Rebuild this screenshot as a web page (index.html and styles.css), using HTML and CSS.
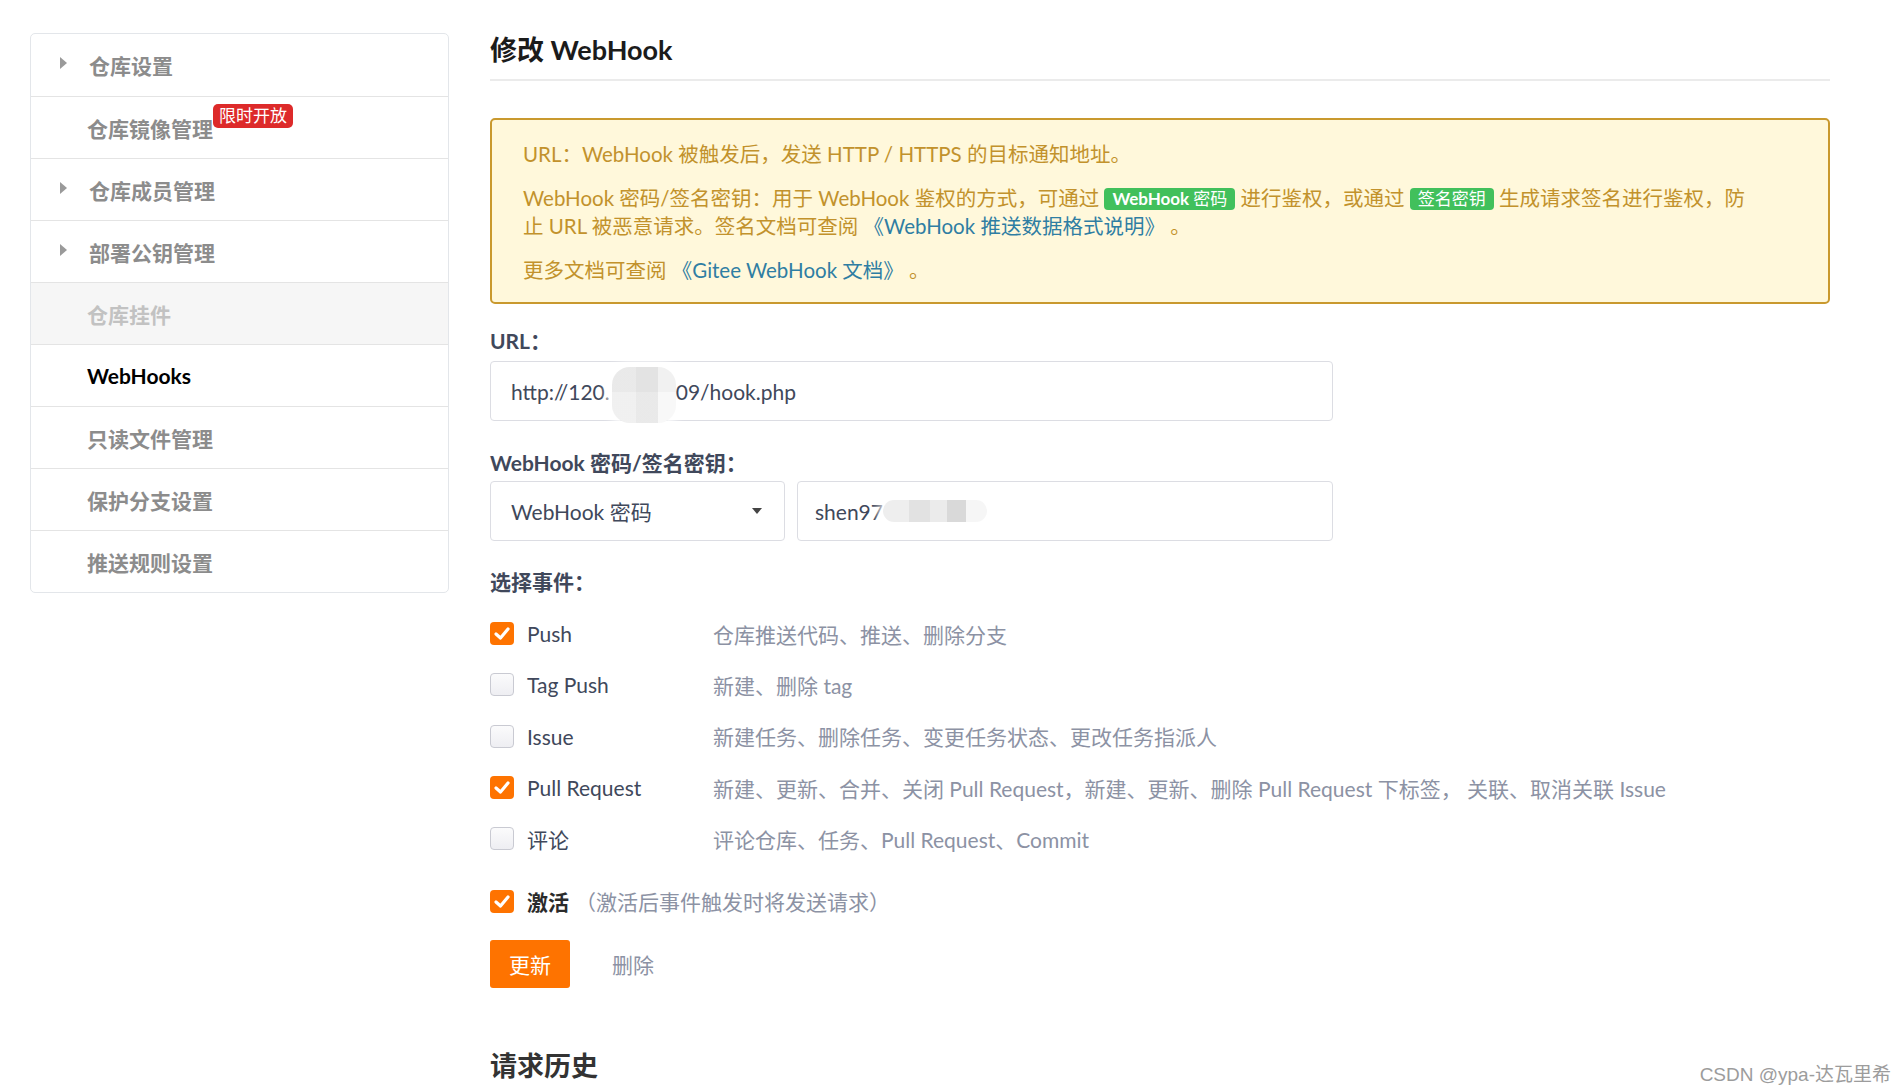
FILE: index.html
```html
<!DOCTYPE html>
<html lang="zh-CN">
<head>
    <meta charset="UTF-8">
    <title>修改 WebHook</title>
    <link rel="stylesheet" href="styles.css">
</head>
<body>

    <!-- Sidebar -->
    <aside class="sidebar">
        <ul class="side-menu">
            <li class="side-item has-arrow"><span class="arrow"></span>仓库设置</li>
            <li class="side-item">仓库镜像管理<span class="hot-badge">限时开放</span></li>
            <li class="side-item has-arrow"><span class="arrow"></span>仓库成员管理</li>
            <li class="side-item has-arrow"><span class="arrow"></span>部署公钥管理</li>
            <li class="side-item disabled">仓库挂件</li>
            <li class="side-item active">WebHooks</li>
            <li class="side-item">只读文件管理</li>
            <li class="side-item">保护分支设置</li>
            <li class="side-item">推送规则设置</li>
        </ul>
    </aside>

    <!-- Main Content -->
    <main class="content">
        <h2 class="page-title">修改 WebHook</h2>

        <div class="notice">
            <p>URL：WebHook 被触发后，发送 HTTP / HTTPS 的目标通知地址。</p>
            <p>WebHook 密码/签名密钥：用于 WebHook 鉴权的方式，可通过 <span class="tag">WebHook <span class="tag-cn">密码</span></span> 进行鉴权，或通过 <span class="tag"><span class="tag-cn">签名密钥</span></span> 生成请求签名进行鉴权，防止 URL 被恶意请求。签名文档可查阅 <a href="#">《WebHook 推送数据格式说明》</a> 。</p>
            <p>更多文档可查阅 <a href="#">《Gitee WebHook 文档》</a> 。</p>
        </div>

        <label class="field-label">URL：</label>
        <div class="text-input url-input">http://120.<span class="blur blur-url"></span>09/hook.php</div>

        <label class="field-label second">WebHook 密码/签名密钥：</label>
        <div class="secret-row">
            <div class="select-box">WebHook 密码<span class="caret"></span></div>
            <div class="text-input secret-input">shen97<span class="blur blur-secret"></span></div>
        </div>

        <label class="field-label events-label">选择事件：</label>
        <div class="events">
            <div class="event-row">
                <span class="check checked"><svg viewBox="0 0 24 23"><polyline points="6,12 10.5,16 18,7"/></svg></span>
                <span class="event-name">Push</span>
                <span class="event-desc">仓库推送代码、推送、删除分支</span>
            </div>
            <div class="event-row">
                <span class="check"></span>
                <span class="event-name">Tag Push</span>
                <span class="event-desc">新建、删除 tag</span>
            </div>
            <div class="event-row">
                <span class="check"></span>
                <span class="event-name">Issue</span>
                <span class="event-desc">新建任务、删除任务、变更任务状态、更改任务指派人</span>
            </div>
            <div class="event-row">
                <span class="check checked"><svg viewBox="0 0 24 23"><polyline points="6,12 10.5,16 18,7"/></svg></span>
                <span class="event-name">Pull Request</span>
                <span class="event-desc">新建、更新、合并、关闭 Pull Request，新建、更新、删除 Pull Request 下标签， 关联、取消关联 Issue</span>
            </div>
            <div class="event-row">
                <span class="check"></span>
                <span class="event-name">评论</span>
                <span class="event-desc">评论仓库、任务、Pull Request、Commit</span>
            </div>
        </div>

        <div class="active-row">
            <span class="check checked"><svg viewBox="0 0 24 23"><polyline points="6,12 10.5,16 18,7"/></svg></span>
            <strong>激活</strong>
            <span class="event-desc">（激活后事件触发时将发送请求）</span>
        </div>

        <div class="actions">
            <button class="btn-update">更新</button>
            <a href="#" class="btn-delete">删除</a>
        </div>

        <h2 class="history-title">请求历史</h2>
    </main>

    <div class="watermark">CSDN @ypa-达瓦里希</div>

</body>
</html>
```

FILE: styles.css
```css
/* Page */
body {
    margin: 0;
    padding: 33px 0 0 30px;
    display: flex;
    align-items: flex-start;
    background: #fff;
    color: #40485b;
    font-family: "Lato", "Noto Sans CJK SC", sans-serif;
    font-size: 21px;
    height: 1058px;
    overflow: hidden;
}

/* Sidebar */
.sidebar {
    width: 417px;
    flex-shrink: 0;
    border: 1px solid #e3e6ea;
    border-radius: 5px;
    margin-right: 41px;
    overflow: hidden;
}

.side-menu {
    list-style: none;
    margin: 0;
    padding: 0;
}

.side-item {
    box-sizing: border-box;
    height: 62px;
    display: flex;
    align-items: center;
    padding-left: 56px;
    border-top: 1.5px solid #e4e4e4;
    color: #8c8c8c;
    font-weight: bold;
    font-size: 21px;
}

.side-item:first-child {
    border-top: none;
}

.side-item.has-arrow {
    padding-left: 29px;
}

.arrow {
    width: 0;
    height: 0;
    border-top: 6px solid transparent;
    border-bottom: 6px solid transparent;
    border-left: 7px solid #9a9a9a;
    margin-right: 22px;
    margin-top: -4px;
}

.side-item.disabled {
    background: #f6f6f6;
    color: #c2c2c2;
}

.side-item.active {
    color: #000;
}

.hot-badge {
    position: relative;
    top: -12px;
    display: inline-block;
    height: 24px;
    line-height: 24px;
    padding: 0 6px;
    background: #dd2a2a;
    color: #fff;
    font-size: 17px;
    font-weight: normal;
    border-radius: 5px;
}

/* Main Content */
.content {
    width: 1340px;
}

.page-title {
    margin: 0;
    font-size: 27px;
    line-height: 34px;
    padding-bottom: 12px;
    border-bottom: 2px solid #ebebeb;
    color: #1b1b1b;
}

/* Notice box */
.notice {
    margin-top: 37px;
    padding: 20px 72px 18px 31px;
    border: 2px solid #c9992e;
    border-radius: 5px;
    background: #fff8db;
    color: #c2922c;
    font-size: 20.5px;
}

.notice p {
    margin: 0;
    line-height: 28px;
}

.notice p + p {
    margin-top: 16px;
}

.notice a {
    color: #2f7ea3;
    text-decoration: none;
}

.tag {
    display: inline-block;
    height: 22px;
    line-height: 22px;
    padding: 0 8px;
    background: #41c05c;
    color: #fff;
    font-size: 17px;
    font-weight: bold;
    border-radius: 4px;
    vertical-align: 1px;
}

.tag-cn {
    font-weight: normal;
}

/* Form fields */
.field-label {
    display: block;
    margin: 23px 0 6px;
    font-weight: bold;
    line-height: 28px;
    color: #40485b;
}

.field-label.second {
    margin-top: 28px;
    margin-bottom: 4px;
}

.field-label.events-label {
    margin-top: 27px;
    margin-bottom: 12px;
}

.text-input, .select-box {
    box-sizing: border-box;
    height: 60px;
    display: flex;
    align-items: center;
    padding: 0 20px;
    border: 1.5px solid #dcdde3;
    border-radius: 4px;
    color: #40485b;
    background: #fff;
}

.url-input {
    width: 843px;
}

.secret-row {
    display: flex;
    gap: 12px;
}

.select-box {
    width: 295px;
    justify-content: space-between;
}

.caret {
    width: 0;
    height: 0;
    border-left: 5px solid transparent;
    border-right: 5px solid transparent;
    border-top: 6px solid #444;
    margin-right: 2px;
}

.secret-input {
    width: 536px;
    padding-left: 17px;
}

/* Mosaic blur over hidden parts */
.blur {
    display: inline-block;
    border-radius: 18px;
    box-shadow: 0 0 8px 5px rgba(255, 255, 255, 0.85);
}

.blur-url {
    width: 64px;
    height: 56px;
    margin: 8px 0 0 2px;
    background-image:
        linear-gradient(90deg, rgba(0,0,0,0.03) 0 38%, rgba(0,0,0,0.06) 38% 72%, rgba(0,0,0,0) 72%),
        linear-gradient(180deg, #f1f1f1 0 45%, #f8f8f8 45%);
}

.blur-secret {
    width: 104px;
    height: 22px;
    background:
        linear-gradient(90deg, #eeeeee 0 25%, #e2e2e2 25% 45%, #ebebeb 45% 62%, #d9d9d9 62% 80%, #f6f6f6 80%);
}

/* Events */
.event-row, .active-row {
    display: grid;
    grid-template-columns: 37px 186px 1fr;
    align-items: center;
    height: 51.3px;
}

.active-row {
    grid-template-columns: 37px auto 1fr;
    margin-top: 11px;
}

.active-row strong {
    color: #2b2b2b;
    margin-right: 6px;
}

.check {
    box-sizing: border-box;
    width: 24px;
    height: 23px;
    border: 1.5px solid #c9cad2;
    border-radius: 4px;
    background: linear-gradient(#fbfbfc, #eeeef2);
}

.check.checked {
    border: none;
    background: #fe7300;
}

.check svg {
    display: block;
    width: 24px;
    height: 23px;
}

.check polyline {
    fill: none;
    stroke: #fff;
    stroke-width: 3.2;
    stroke-linecap: round;
    stroke-linejoin: round;
}

.event-name {
    color: #40485b;
}

.event-desc {
    color: #8c92a4;
}

/* Buttons */
.actions {
    display: flex;
    align-items: center;
    margin-top: 13px;
}

.btn-update {
    width: 80px;
    height: 48px;
    border: none;
    border-radius: 3px;
    background: #fe7300;
    color: #fff;
    font-family: inherit;
    font-size: 21px;
    cursor: pointer;
}

.btn-delete {
    margin-left: 42px;
    color: #8c92a4;
    text-decoration: none;
}

.history-title {
    margin: 60px 0 0;
    font-size: 27px;
    line-height: 36px;
    color: #333;
}

/* Watermark */
.watermark {
    position: absolute;
    right: 10px;
    bottom: 5px;
    font-family: "Liberation Sans", "Noto Sans CJK SC", sans-serif;
    font-size: 19px;
    color: #9c9c9c;
    text-shadow: 0 0 2px #fff;
}
```
